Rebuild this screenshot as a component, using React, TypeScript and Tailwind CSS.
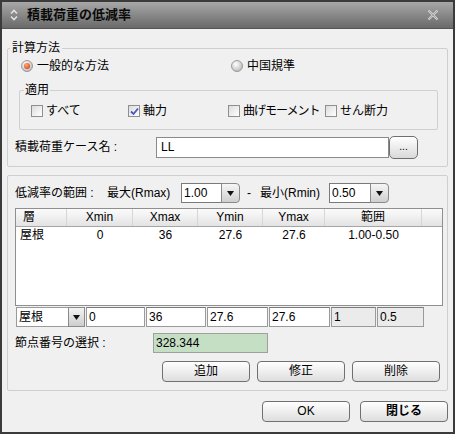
import React from 'react';

const FONT = "font-['Liberation_Sans','Noto_Sans_CJK_JP',sans-serif]";

// radio: orange dot when selected
const Radio = ({ on, label }: { on?: boolean; label: string }) => (
  <div className="flex items-center gap-[4px]">
    <svg width="12" height="12" viewBox="0 0 12 12">
      <defs>
        <radialGradient id="rg-off" cx="40%" cy="35%" r="70%">
          <stop offset="0%" stopColor="#ffffff" />
          <stop offset="100%" stopColor="#b8b8b8" />
        </radialGradient>
        <radialGradient id="rg-on" cx="40%" cy="35%" r="70%">
          <stop offset="0%" stopColor="#ffb070" />
          <stop offset="100%" stopColor="#e0401a" />
        </radialGradient>
      </defs>
      <circle cx="6" cy="6" r="5.5" fill="url(#rg-off)" stroke="#8a8a8a" strokeWidth="0.8" />
      {on && <circle cx="6" cy="6" r="3" fill="url(#rg-on)" />}
    </svg>
    <span>{label}</span>
  </div>
);

const Check = ({ on, label, w, tight }: { on?: boolean; label: string; w: string; tight?: boolean }) => (
  <div className={`flex items-center gap-[3px] whitespace-nowrap ${w}`}>
    <div className="w-[12px] h-[12px] shrink-0 border border-[#8e8f8f] bg-linear-to-br from-[#dcdcdc] to-[#ffffff] flex items-center justify-center">
      {on && (
        <svg width="9" height="9" viewBox="0 0 9 9">
          <path d="M1 4.5 L3.5 7 L8 1.5" fill="none" stroke="#4757c4" strokeWidth="1.8" />
        </svg>
      )}
    </div>
    <span className={tight ? 'tracking-[-1px]' : ''}>{label}</span>
  </div>
);

const Arrow = () => (
  <svg width="7" height="5" viewBox="0 0 7 5">
    <path d="M0 0 H7 L3.5 5 Z" fill="#111" />
  </svg>
);

const Combo = ({ value, w }: { value: string; w: string }) => (
  <div className={`flex h-[20px] ${w}`}>
    <div className="flex-1 border border-[#7a7a7a] bg-white px-[2px] leading-[18px]">{value}</div>
    <div className="w-[19px] -ml-px border border-[#8a8a8a] rounded-r-[4px] bg-linear-to-b from-[#f6f6f6] to-[#cfcfcf] flex items-center justify-center">
      <Arrow />
    </div>
  </div>
);

const Field = ({ value, w, gray }: { value: string; w: string; gray?: boolean }) => (
  <div className={`h-[20px] border border-[#9a9a9a] border-t-[#7a7a7a] px-[2px] leading-[18px] ${gray ? 'bg-[#ebebeb]' : 'bg-white'} ${w}`}>
    {value}
  </div>
);

const Btn = ({ label, bold }: { label: string; bold?: boolean }) => (
  <button className={`w-[88px] h-[21px] rounded-[4px] border border-[#707070] bg-linear-to-b from-[#ffffff] to-[#dedede] leading-[19px] ${bold ? 'font-bold' : 'font-normal'}`}>
    {label}
  </button>
);

const cols = [
  { h: '層', w: 'w-[51px]', v: '屋根', left: true },
  { h: 'Xmin', w: 'w-[66px]', v: '0' },
  { h: 'Xmax', w: 'w-[65px]', v: '36' },
  { h: 'Ymin', w: 'w-[65px]', v: '27.6' },
  { h: 'Ymax', w: 'w-[62px]', v: '27.6' },
  { h: '範囲', w: 'w-[97px]', v: '1.00-0.50' },
];

export default function App() {
  return (
    <div className={`w-[455px] h-[434px] border-2 border-[#3b3b3b] flex flex-col text-[12px] leading-[16px] text-black ${FONT}`}>
      {/* title bar */}
      <div className="h-[27px] shrink-0 bg-linear-to-b from-[#a8a8a8] via-[#888888] to-[#6a6a6a] border-b border-[#555] flex items-center">
        <svg width="12" height="14" viewBox="0 0 12 14" className="ml-[6px]">
          <path d="M3 5.5 L6 2.5 L9 5.5" fill="none" stroke="#e2e2e2" strokeWidth="1.6" />
          <path d="M3 8.5 L6 11.5 L9 8.5" fill="none" stroke="#e2e2e2" strokeWidth="1.6" />
        </svg>
        <span className="ml-[7px] text-[13px] font-bold text-[#0a0a0a]">積載荷重の低減率</span>
        <svg width="12" height="12" viewBox="0 0 12 12" className="ml-auto mr-[14px]">
          <path d="M1.5 1.5 L10.5 10.5 M10.5 1.5 L1.5 10.5" stroke="#d4d4d4" strokeWidth="2.2" />
          <path d="M1.5 1.5 L10.5 10.5 M10.5 1.5 L1.5 10.5" stroke="#9a9a9a" strokeWidth="0.8" />
        </svg>
      </div>

      {/* body */}
      <div className="flex-1 bg-[#f0f0f0] px-[5px] flex flex-col">
        <fieldset className="mt-[11px] border border-[#cfcfcf] rounded-[2px] pl-[2px] pr-[2px] pb-[8px] m-0 min-w-0">
          <legend className="px-[2px] leading-[16px]">計算方法</legend>
          <div className="h-[20px] flex items-center ml-[11px]">
            <div className="w-[210px]">
              <Radio on label="一般的な方法" />
            </div>
            <Radio label="中国規準" />
          </div>

          <fieldset className="mt-[6px] ml-[9px] w-[419px] border border-[#cfcfcf] rounded-[2px] pl-[4px] pb-[8px] m-0 min-w-0">
            <legend className="px-[1px] leading-[16px]">適用</legend>
            <div className="mt-[3px] h-[20px] flex items-center ml-[7px]">
              <Check label="すべて" w="w-[97px]" />
              <Check on label="軸力" w="w-[100px]" />
              <Check tight label="曲げモーメント" w="w-[97px]" />
              <Check label="せん断力" w="w-[97px]" />
            </div>
          </fieldset>

          <div className="mt-[6px] h-[22px] flex items-center ml-[5px]">
            <span className="w-[141px]">積載荷重ケース名 :</span>
            <div className="w-[233px] h-[21px] border border-[#8a8a8a] bg-white px-[4px] leading-[19px]">LL</div>
            <button className="w-[29px] h-[23px] rounded-[5px] border border-[#6f6f6f] bg-linear-to-b from-[#ffffff] to-[#d9d9d9] text-[10px] leading-[12px]">
              ...
            </button>
          </div>
        </fieldset>

        <div className="mt-[8px] border border-[#cfcfcf] rounded-[2px] pb-[8px]">
          <div className="mt-[7px] h-[20px] flex items-center ml-[7px]">
            <span className="w-[92px]">低減率の範囲 :</span>
            <span className="w-[74px]">最大(Rmax)</span>
            <Combo value="1.00" w="w-[59px]" />
            <span className="ml-[7px] w-[13px]">-</span>
            <span className="w-[69px]">最小(Rmin)</span>
            <Combo value="0.50" w="w-[60px]" />
          </div>

          {/* table */}
          <div className="mt-[5px] ml-[7px] w-[428px] h-[98px] border border-[#8f8f8f] bg-white flex flex-col">
            <div className="h-[18px] flex bg-linear-to-b from-[#fbfbfb] to-[#e3e3e3] border-b border-[#a5a5a5]">
              {cols.map((c) => (
                <div
                  key={c.h}
                  className={`${c.w} border-r border-[#d6d6d6] leading-[17px] ${c.left ? 'pl-[7px]' : 'text-center'}`}
                >
                  {c.h}
                </div>
              ))}
              <div className="flex-1" />
            </div>
            <div className="h-[17px] flex">
              {cols.map((c) => (
                <div key={c.h} className={`${c.w} leading-[17px] ${c.left ? 'pl-[4px]' : 'text-center'}`}>
                  {c.v}
                </div>
              ))}
            </div>
          </div>

          {/* edit row */}
          <div className="mt-px ml-[8px] h-[20px] flex gap-px">
            <div className="w-[69px] flex">
              <div className="flex-1 border border-[#9a9a9a] bg-white px-[2px] leading-[18px]">屋根</div>
              <div className="w-[17px] -ml-px border border-[#8a8a8a] bg-linear-to-b from-[#f4f4f4] to-[#cdcdcd] flex items-center justify-center">
                <Arrow />
              </div>
            </div>
            <Field value="0" w="w-[59px]" />
            <Field value="36" w="w-[60px]" />
            <Field value="27.6" w="w-[61px]" />
            <Field value="27.6" w="w-[61px]" />
            <Field value="1" w="w-[45px]" gray />
            <Field value="0.5" w="w-[47px]" gray />
          </div>

          <div className="mt-[6px] h-[20px] flex items-center ml-[7px]">
            <span className="w-[138px]">節点番号の選択 :</span>
            <div className="w-[115px] h-[20px] border border-[#a0a0a0] bg-[#c5dfc5] px-[2px] leading-[18px]">328.344</div>
          </div>

          <div className="mt-[8px] flex justify-end gap-[7px] pr-[7px]">
            <Btn label="追加" />
            <Btn label="修正" />
            <Btn label="削除" />
          </div>
        </div>

        <div className="mt-[10px] flex justify-end gap-[10px]">
          <Btn label="OK" />
          <Btn label="閉じる" bold />
        </div>
      </div>
    </div>
  );
}
